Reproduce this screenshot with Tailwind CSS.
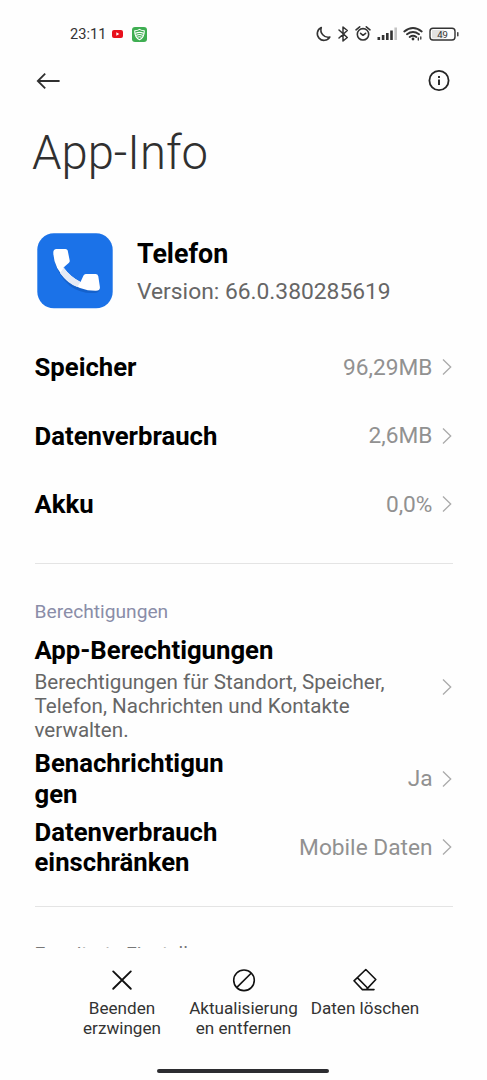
<!DOCTYPE html>
<html lang="de">
<head>
<meta charset="utf-8">
<title>App-Info</title>
<script src="https://cdn.jsdelivr.net/npm/@tailwindcss/browser@4"></script>
</head>
<body class="bg-[#fefefe]">
<div class="flex h-[1080px] w-[487px] flex-col overflow-hidden bg-[#fefefe] font-['Roboto',sans-serif] text-black">
  <div class="flex h-[60px] shrink-0 items-start justify-between pt-[24px] pr-[28px] pl-[70px]">
    <div class="flex h-5 items-center">
      <span class="w-[42px] text-[14.600px] leading-5 text-[#333] whitespace-nowrap">23:11</span>
      <svg class="h-2 w-[11px]" viewBox="0 0 11 8"><rect width="11" height="8" rx="2" fill="#e8101c"/><path d="M4.3 2.2 7.3 4 4.3 5.8z" fill="#fff"/></svg>
      <svg class="ml-[9px] h-[15px] w-[15px]" viewBox="0 0 15 15"><rect width="15" height="15" rx="3" fill="#3fae52"/><g fill="none" stroke="#fff" stroke-width="1.1" stroke-linecap="round" stroke-linejoin="round"><path d="M7.5 2.4C6 3.4 4.300 3.700 2.700 3.700 2.700 8 4 11 7.500 12.800 11 11 12.300 8 12.300 3.700 10.700 3.700 9 3.400 7.500 2.400z"/><path d="M3.500 6.200q4-1.700 8 0M4.500 8.200q3-1.400 6 0M5.900 10.100q1.600-.8 3.200 0"/></g></svg>
    </div>
    <svg class="h-5 w-[144px]" viewBox="0 0 144 20" fill="none" stroke="#333" stroke-width="1.600" stroke-linecap="round" stroke-linejoin="round">
      <path d="M6.300 3.500a6.700 6.700 0 1 0 8.500 9.500A7.300 7.300 0 0 1 6.300 3.500z"/>
      <path d="M24 6l8.300 7.500-4.300 3.500V3l4.300 3.500L24 14" stroke-width="1.500"/>
      <circle cx="48" cy="10.300" r="5.700"/><path d="M45.600 9.300 48 11.300l2.600-2M41 5.800l3.700-3M55 5.800l-3.700-3"/>
      <g fill="#333" stroke="none"><rect x="62.500" y="13" width="2.600" height="3"/><rect x="66.800" y="11" width="2.600" height="5"/><rect x="71" y="9" width="2.600" height="7"/><rect x="75.200" y="6.500" width="2.600" height="9.500"/><rect x="79.400" y="3.500" width="2.600" height="12.500" fill="#c4c4c4"/></g>
      <path d="M89.300 7.400q8.700-7 17.400 0M92 10.300q6-4.500 12 0M94.700 13q3.300-2.500 6.600 0" stroke-width="1.900"/><circle cx="98" cy="15" r="1.400" fill="#333" stroke="none"/><path d="M103.300 14v2M105.800 13v2" stroke-width="1.300"/>
      <rect x="115" y="4.300" width="25" height="11.700" rx="3" stroke-width="1.400"/><path d="M117 6h12v8.500h-12z" fill="#e2e2e2" stroke="none"/><path d="M142.800 8.800v3" stroke-width="1.400"/>
      <text x="127.500" y="13.700" text-anchor="middle" fill="#333" stroke="none" class="text-[9.500px]">49</text>
    </svg>
  </div>
  <div class="flex h-[42px] shrink-0 items-center justify-between pr-[36px] pl-[36px]">
    <svg class="h-6 w-6" viewBox="0 0 24 24" fill="none" stroke="#303030" stroke-width="1.800"><path d="M23.600 12H1.800M9.200 4.700 1.800 12l7.400 7.300"/></svg>
    <svg class="h-6 w-6" viewBox="0 0 24 24" fill="none" stroke="#252525" stroke-width="1.800"><circle cx="12" cy="11.500" r="9.600"/><path d="M12 10.500v5.500M12 7v2" stroke-width="1.900"/></svg>
  </div>
  <h1 class="flex h-[106px] shrink-0 items-center pb-[3px] pl-[32px] text-[47.200px] font-light whitespace-nowrap text-[#303030]">App-Info</h1>
  <div class="flex h-[125px] shrink-0 items-center gap-6 pl-[37px]">
    <svg class="h-[76px] w-[76px]" viewBox="0 0 76 76"><rect x=".3" y=".3" width="75.400" height="75" rx="16.500" fill="#1b72e8"/><path d="M16.500 24Q20 42 33 53 44 61 58 60 62.500 59.500 62.700 56L40 52 24 36z" fill="#0d4fb0" opacity=".5"/><path d="M19.500 16H28.500Q30.300 16 30.700 17.500L32.700 27.500Q33 29 31.700 30L26.500 34.500Q33.500 44 43.500 49L46.500 42.500Q47.200 41 48.800 41H58.500Q60.800 41 61.300 43.300L62.900 54Q63.200 57.800 59 57.800 43 58 30 47.500 16.500 35 16.300 19.500 16.300 16 19.500 16z" fill="#fff"/><path d="M28 33.200 26.500 34.500Q33.500 44 43.500 49L40.300 54Q30.500 50.500 23 40z" fill="#e5eaf5"/></svg>
    <div class="flex flex-col pt-[4px]">
      <span class="h-[37px] text-[26.800px] leading-[36px] font-bold">Telefon</span>
      <span class="h-[37px] text-[22.800px] leading-[38px] whitespace-nowrap text-[#666]">Version: 66.0.380285619</span>
    </div>
  </div>
  <main class="flex h-[615px] shrink-0 flex-col overflow-hidden px-[34.500px]">
    <div class="flex h-[68.500px] shrink-0 items-center text-[22.700px] text-[#919191]"><span class="flex-1 text-[25.700px] font-bold text-black">Speicher</span><span class="pt-px">96,29MB</span><svg class="ml-[9px] mr-px h-4 w-[10px]" viewBox="0 0 10 16" fill="none" stroke="#aaa" stroke-width="1.300"><path d="M1 .5 8.700 8 1 15.500"/></svg></div>
    <div class="flex h-[68.500px] shrink-0 items-center text-[22.700px] text-[#919191]"><span class="flex-1 pt-px text-[25.700px] font-bold text-black">Datenverbrauch</span><span class="pt-px">2,6MB</span><svg class="ml-[9px] mr-px h-4 w-[10px]" viewBox="0 0 10 16" fill="none" stroke="#aaa" stroke-width="1.300"><path d="M1 .5 8.700 8 1 15.500"/></svg></div>
    <div class="flex h-[68.500px] shrink-0 items-center text-[22.700px] text-[#919191]"><span class="flex-1 text-[25.700px] font-bold text-black">Akku</span><span class="pt-px">0,0%</span><svg class="ml-[9px] mr-px h-4 w-[10px]" viewBox="0 0 10 16" fill="none" stroke="#aaa" stroke-width="1.300"><path d="M1 .5 8.700 8 1 15.500"/></svg></div>
    <div class="mt-[24.500px] h-px shrink-0 bg-[#e4e4e4]"></div>
    <h2 class="mt-[36px] h-6 shrink-0 text-[19.200px] leading-6 text-[#8a8da8]">Berechtigungen</h2>
    <div class="mt-[6px] flex h-[114.500px] shrink-0 items-center">
      <div class="flex flex-1 flex-col"><span class="h-[40px] text-[25.700px] leading-[40px] font-bold">App-Berechtigungen</span><p class="h-[75px] text-[20.600px] leading-[24.300px] whitespace-nowrap text-[#666]">Berechtigungen für Standort, Speicher,<br>Telefon, Nachrichten und Kontakte<br>verwalten.</p></div>
      <svg class="mr-px h-4 w-[10px]" viewBox="0 0 10 16" fill="none" stroke="#aaa" stroke-width="1.300"><path d="M1 .5 8.700 8 1 15.500"/></svg>
    </div>
    <div class="flex h-[68.500px] shrink-0 items-center text-[22.700px] text-[#919191]"><span class="flex-1 text-[25.700px] leading-[30.400px] font-bold text-black">Benachrichtigun<br>gen</span><span>Ja</span><svg class="ml-[9px] mr-px h-4 w-[10px]" viewBox="0 0 10 16" fill="none" stroke="#aaa" stroke-width="1.300"><path d="M1 .5 8.700 8 1 15.500"/></svg></div>
    <div class="flex h-[68.500px] shrink-0 items-center text-[22.700px] text-[#919191]"><span class="flex-1 text-[25.700px] leading-[30.400px] font-bold text-black">Datenverbrauch<br>einschränken</span><span class="pt-px">Mobile Daten</span><svg class="ml-[9px] mr-px h-4 w-[10px]" viewBox="0 0 10 16" fill="none" stroke="#aaa" stroke-width="1.300"><path d="M1 .5 8.700 8 1 15.500"/></svg></div>
    <div class="mt-[24.500px] h-px shrink-0 bg-[#e4e4e4]"></div>
    <h2 class="mt-[35px] h-6 shrink-0 text-[19.200px] leading-6 text-[#777]">Erweiterte Einstellungen</h2>
  </main>
  <footer class="flex flex-1 flex-col items-center">
    <div class="flex h-[121px] pt-5 text-center text-[17.100px] leading-[19.500px] text-[#333]">
      <div class="flex w-[121.500px] flex-col items-center gap-[7px]"><svg class="h-6 w-6" viewBox="0 0 24 24" fill="none" stroke="#111" stroke-width="1.900" stroke-linecap="round"><path d="M3.200 3.400l17.600 17.400M20.800 3.400 3.200 20.800"/></svg><span>Beenden<br>erzwingen</span></div>
      <div class="flex w-[121.500px] flex-col items-center gap-[7px]"><svg class="h-6 w-6" viewBox="0 0 24 24" fill="none" stroke="#111" stroke-width="1.600"><circle cx="12" cy="12.300" r="10.300"/><path d="M4.900 19.400 19.100 5.200"/></svg><span>Aktualisierung<br>en entfernen</span></div>
      <div class="flex w-[121.500px] flex-col items-center gap-[7px]"><svg class="h-6 w-6" viewBox="0 0 24 24" fill="none" stroke="#111" stroke-width="1.600" stroke-linejoin="round" stroke-linecap="round"><path d="M12.800 1.500 22.800 11.500 13.300 21.600H9.400L1 12.800zM4.300 9.600 14.800 20.200M9.400 21.600H21"/></svg><span>Daten löschen</span></div>
    </div>
    <div class="mr-[2px] h-1 w-[172px] rounded-full bg-[#2c2c30]"></div>
  </footer>
</div>
</body>
</html>
